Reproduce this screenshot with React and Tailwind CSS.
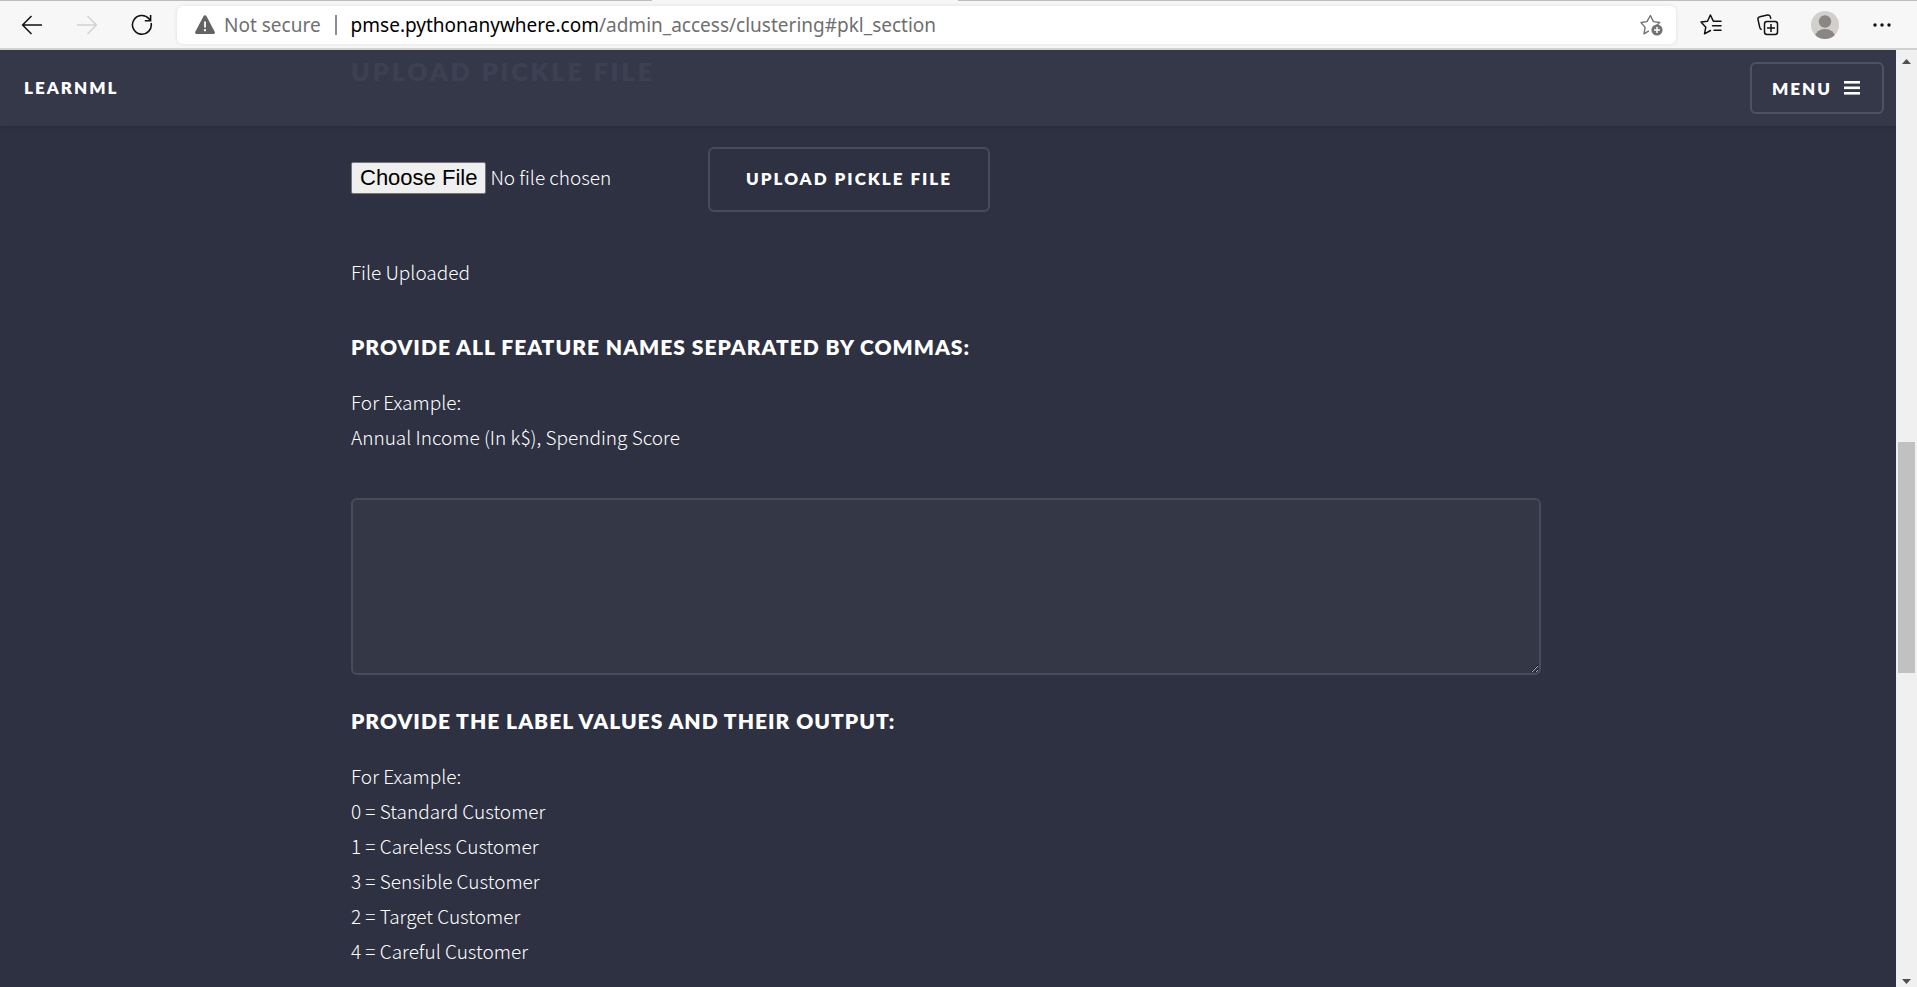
const BODY_FONT = "font-['Noto_Sans_CJK_SC','Noto_Sans',sans-serif] font-light";
const HEAD_FONT = "font-['Lato','Open_Sans',sans-serif] font-extrabold uppercase";

function IconButton({ label, children, disabled }) {
  return (
    <button type="button" aria-label={label} disabled={disabled} className="flex size-8 shrink-0 items-center justify-center">
      {children}
    </button>
  );
}

const stroke = { fill: "none", stroke: "currentColor", strokeWidth: 1.5 };

function BrowserBar() {
  return (
    <div className="flex h-[50px] shrink-0 flex-col border-b-2 border-[#d0d0d0] bg-[#f7f7f7] text-[#111]">
      <div className="flex h-px shrink-0">
        <span className="w-[34%] bg-[#bdbdbd]" />
        <span className="w-[16%]" />
        <span className="flex-1 bg-[#bdbdbd]" />
      </div>
      <div className="flex flex-1 items-center pl-4">
        <div className="flex gap-[23px]">
          <IconButton label="Back">
            <svg width="22" height="20" viewBox="0 0 22 20" {...stroke}>
              <path d="M10.5 1 1.6 10l8.900 9M1.600 10H21" />
            </svg>
          </IconButton>
          <IconButton label="Forward" disabled>
            <svg width="22" height="20" viewBox="0 0 22 20" {...stroke} className="text-[#d2d2d2]">
              <path d="m11.500 1 8.900 9-8.900 9M20.400 10H1" />
            </svg>
          </IconButton>
          <IconButton label="Refresh">
            <svg width="22" height="22" viewBox="0 0 22 22" {...stroke} strokeWidth="1.600">
              <path d="M20.100 9A9.400 9.400 0 1 1 18 4.700L19.600 6.500M19.600 1v5.700h-5.800" />
            </svg>
          </IconButton>
        </div>
        <div className="ml-[19px] flex h-[38px] min-w-0 flex-1 items-center rounded-md bg-white pl-[17px] pr-3 font-['Noto_Sans','Open_Sans',sans-serif] text-[19px] text-[#6f6f6f] shadow-[0_0_4px_rgba(0,0,0,0.1)]">
          <svg width="22" height="20" viewBox="0 0 22 20" className="shrink-0">
            <path d="M9.500 1.200a1.700 1.700 0 0 1 3 0l8.200 15.500a1.500 1.500 0 0 1-1.400 2.300H2.700a1.500 1.500 0 0 1-1.400-2.300z" fill="#636363" />
            <path d="M11 6.500v6M11 14v2.200" stroke="#fff" strokeWidth="1.800" />
          </svg>
          <span className="ml-2 shrink-0 pt-0.5">Not secure</span>
          <span className="mx-3.5 h-5 w-[2px] shrink-0 bg-[#8c8c8c]" />
          <span className="min-w-0 flex-1 truncate pt-0.5">
            <span className="text-black">pmse.pythonanywhere.com</span>/admin_access/clustering#pkl_section
          </span>
          <button type="button" aria-label="Add to favorites" className="shrink-0">
            <svg width="24" height="22" viewBox="0 0 24 22" fill="none">
              <path d="m8.900 16.800-4.900 3 1.100-6.400L1 8.500l5.900-.9L10.400 1.500l3 6.100 6.300.9-3.200 3" stroke="#737373" strokeWidth="1.400" strokeLinejoin="round" />
              <circle cx="17" cy="16" r="5.600" fill="#737373" />
              <path d="M17 13v6M14 16h6" stroke="#fff" strokeWidth="1.500" />
            </svg>
          </button>
        </div>
        <div className="flex items-center gap-[25px] pl-[19px] pr-[19px]">
          <IconButton label="Favorites">
            <svg width="22" height="21" viewBox="0 0 22 21" {...stroke} strokeLinejoin="round" strokeLinecap="round">
              <path d="m10.500 16.500-6 3.300 1.300-6.600L1 8.100l6.500-.9L10.400 1l2.800 5.800M13.500 7.200H21M12.500 11.800H21M14 16.300h7" />
            </svg>
          </IconButton>
          <IconButton label="Collections">
            <svg width="22" height="22" viewBox="0 0 22 22" {...stroke}>
              <rect x="7.500" y="7.500" width="13" height="13" rx="2.500" />
              <path d="M14 10v8M10 14h8M4.800 15.500a2.500 2.500 0 0 1-2-1.900L1 5.600a2.400 2.400 0 0 1 1.900-2.900L10.500 1a2.400 2.400 0 0 1 2.900 1.900l.4 1.900" />
            </svg>
          </IconButton>
          <IconButton label="Profile">
            <svg width="28" height="28" viewBox="0 0 28 28">
              <clipPath id="avatar"><circle cx="14" cy="14" r="14" /></clipPath>
              <g clipPath="url(#avatar)">
                <rect width="28" height="28" fill="#d2d0cd" />
                <circle cx="14" cy="10.500" r="6.200" fill="#8a8683" />
                <ellipse cx="14" cy="26" rx="10" ry="8" fill="#8a8683" />
              </g>
            </svg>
          </IconButton>
          <IconButton label="Settings and more">
            <svg width="18" height="4" viewBox="0 0 18 4" fill="currentColor">
              <circle cx="2" cy="2" r="1.700" /><circle cx="9" cy="2" r="1.700" /><circle cx="16" cy="2" r="1.700" />
            </svg>
          </IconButton>
        </div>
      </div>
    </div>
  );
}

function SiteHeader() {
  return (
    <header className={`absolute inset-x-0 top-0 flex h-[76px] items-center justify-between bg-[#35384a]/96 pl-6 pr-3 text-[17px] tracking-[2px] shadow-[0_0_4px_rgba(0,0,0,0.25)] ${HEAD_FONT}`}>
      <a href="#top" className="pb-0.5">LearnML</a>
      <button type="button" className="flex h-[52px] items-center gap-3 rounded-md border-2 border-[#4f5264] pl-5 pr-[22px] uppercase tracking-[2px]">
        Menu
        <svg width="16" height="14" viewBox="0 0 16 14" fill="currentColor">
          <rect width="16" height="2.600" /><rect y="5.500" width="16" height="2.600" /><rect y="11" width="16" height="2.600" />
        </svg>
      </button>
    </header>
  );
}

function Scrollbar() {
  return (
    <div className="flex w-[21px] shrink-0 flex-col items-center bg-[#f0f0f0] pb-[3px] pt-[9px]">
      <svg width="9" height="5" viewBox="0 0 9 5"><path d="M0 5 4.500 0 9 5z" fill="#505050" /></svg>
      <div className="flex w-full flex-1 flex-col items-center">
        <div className="grow-[378]" />
        <div className="w-[17px] grow-[231] bg-[#c1c1c1]" />
        <div className="grow-[306]" />
      </div>
      <svg width="9" height="5" viewBox="0 0 9 5"><path d="M0 0 4.500 5 9 0z" fill="#505050" /></svg>
    </div>
  );
}

const LABELS = [
  "0 = Standard Customer",
  "1 = Careless Customer",
  "3 = Sensible Customer",
  "2 = Target Customer",
  "4 = Careful Customer",
];

export default function App() {
  return (
    <div className="flex h-screen flex-col overflow-hidden">
      <BrowserBar />
      <div className="flex min-h-0 flex-1">
        <div className={`relative min-w-0 flex-1 overflow-hidden bg-[#2e3141] text-[19px] leading-[35px] text-white ${BODY_FONT}`}>
          <main className="pr-1">
            <form className="mx-auto max-w-[1190px] pt-px" onSubmit={(e) => e.preventDefault()}>
              <h3 className={`border-b-2 border-white/10 pb-7 text-[25px] leading-10 tracking-[3px] ${HEAD_FONT}`}>
                Upload Pickle File
              </h3>
              <div className="mt-[26px] flex items-start">
                <input
                  type="file"
                  aria-label="Pickle file"
                  className="mt-3 w-[357px] file:mr-1 file:h-8 file:rounded-[2px] file:border file:border-solid file:border-[#767676] file:bg-[#efefef] file:px-2 file:font-['Liberation_Sans',Arial,sans-serif] file:text-[22px] file:leading-6 file:font-normal file:text-black"
                />
                <button type="submit" className={`h-[65px] rounded-md border-2 border-[#484b5b] px-9 pb-0.5 text-[17px] tracking-[2px] ${HEAD_FONT}`}>
                  Upload Pickle File
                </button>
              </div>
              <p className="mt-[42px]">File Uploaded</p>
              <h4 className={`mt-10 text-[21px] tracking-[1px] ${HEAD_FONT}`}>
                <label htmlFor="features">Provide all feature names separated by commas:</label>
              </h4>
              <p className="mt-5">
                For Example:
                <br />
                Annual Income (In k$), Spending Score
              </p>
              <textarea id="features" className="mt-11 block h-[177px] w-full rounded-md border-2 border-[#484b5b] bg-[#343746] p-4" />
              <h4 className={`mt-7 text-[21px] tracking-[1px] ${HEAD_FONT}`}>Provide the label values and their output:</h4>
              <p className="mt-5">For Example:</p>
              <ul>
                {LABELS.map((label) => (
                  <li key={label}>{label}</li>
                ))}
              </ul>
            </form>
          </main>
          <SiteHeader />
        </div>
        <Scrollbar />
      </div>
    </div>
  );
}
